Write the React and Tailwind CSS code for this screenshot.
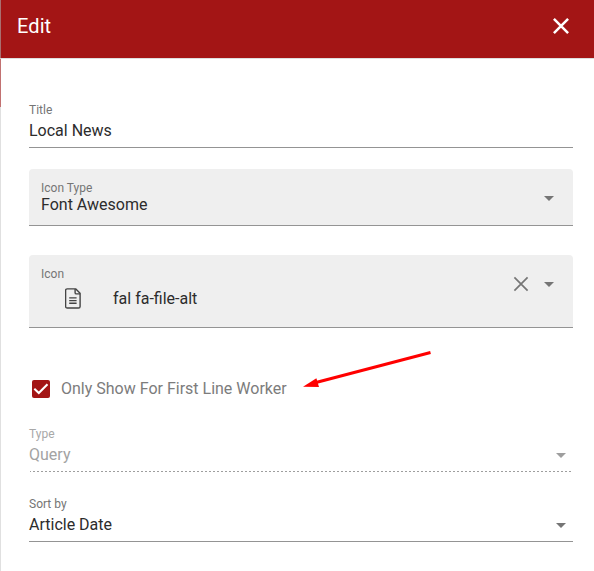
import React from "react";

function Caret({ className = "" }) {
  return (
    <svg className={`h-6 w-6 shrink-0 ${className}`} viewBox="0 0 24 24" fill="currentColor">
      <path d="M7 10l5 5 5-5z" />
    </svg>
  );
}

function LineField({ label, value, caret, disabled }) {
  return (
    <div
      className={`flex h-12 justify-between border-b ${
        disabled ? "border-transparent" : "border-[#949494]"
      }`}
    >
      <div>
        <div className={`h-[19px] text-xs leading-5 ${disabled ? "text-[#a8a8a8]" : "text-[#757575]"}`}>
          {label}
        </div>
        <div
          className={`text-base leading-6 ${
            disabled ? "text-[#a3a3a3]" : "text-[#2c2c2c]"
          }`}
        >
          {value}
        </div>
      </div>
      {caret && <Caret className={`mt-[19px] ${disabled ? "text-[#9e9e9e]" : "text-[#757575]"}`} />}
    </div>
  );
}

export default function App() {
  return (
    <div className="flex h-[571px] w-[594px] overflow-hidden bg-white font-[Roboto,sans-serif]">
      <div className="flex w-px shrink-0 flex-col">
        <div className="h-[58px] bg-[#a97070]" />
        <div className="h-px bg-[#d8c8c8]" />
        <div className="h-12 bg-[#c27171]" />
        <div className="flex-1 bg-[#e0e0e0]" />
      </div>
      <div className="flex flex-1 flex-col">
        <header className="flex h-[59px] shrink-0 items-start justify-between border-b border-[#dedede] bg-[#a31515] pr-[21px] pl-4 text-white">
          <h1 className="pt-[10px] text-xl leading-8 tracking-[0.1px]">Edit</h1>
          <svg
            className="mt-[14px] h-6 w-6"
            viewBox="0 0 24 24"
            fill="none"
            stroke="currentColor"
            strokeWidth="2.5"
          >
            <path d="M4.9 4.9l14.2 14.2M19.1 4.9L4.9 19.1" />
          </svg>
        </header>
        <main className="flex flex-1 flex-col pt-[41px] pr-[21px] pl-7">
          <LineField label="Title" value="Local News" />

          <div className="mt-[21px] flex h-[57px] justify-between rounded-t border-b border-[#949494] bg-[#efefef] px-3">
            <div className="pt-[9px]">
              <div className="h-[15px] text-xs leading-5 text-[#757575]">Icon Type</div>
              <div className="text-base leading-6 text-[#2c2c2c]">Font Awesome</div>
            </div>
            <Caret className="mt-[17px] text-[#757575]" />
          </div>

          <div className="mt-[29px] flex h-[73px] justify-between rounded-t border-b border-[#949494] bg-[#efefef] px-3">
            <div className="pt-[9px]">
              <div className="h-[23px] text-xs leading-5 text-[#757575]">Icon</div>
              <div className="flex items-center text-[#2c2c2c]">
                <svg
                  className="-mt-px ml-6 h-[21px] w-4"
                  viewBox="0 0 16 21"
                  fill="none"
                  stroke="#444"
                  strokeWidth="1.4"
                >
                  <path d="M2.2 .9h8.6l4.3 4.3v13.2a1.6 1.6 0 0 1-1.6 1.6H2.2a1.6 1.6 0 0 1-1.6-1.6V2.5A1.6 1.6 0 0 1 2.2.9z" />
                  <path d="M10.1 1v3.7a1.2 1.2 0 0 0 1.2 1.2H15M4.2 9.9h7.4M4.2 12.6h7.4M4.2 15.3h7.4" />
                </svg>
                <span className="ml-8 text-base leading-6">fal fa-file-alt</span>
              </div>
            </div>
            <div className="flex gap-1 pt-[17px] text-[#757575]">
              <svg className="h-6 w-6" viewBox="0 0 24 24" fill="none" stroke="currentColor" strokeWidth="1.7">
                <path d="M5.4 5.4l13.2 13.2M18.6 5.4L5.4 18.6" />
              </svg>
              <Caret />
            </div>
          </div>

          <div className="relative mt-[49px] flex h-6 items-center pl-[3px]">
            <div className="h-[18px] w-[18px] rounded-[2px] bg-[#a31515]">
              <svg className="h-[18px] w-[18px]" viewBox="0 0 18 18" fill="none" stroke="white" strokeWidth="2.1">
                <path d="M2.3 8.8l4.5 4.2L15.5 4.2" />
              </svg>
            </div>
            <span className="ml-[11px] text-base leading-6 text-[#7c7c7c]">
              Only Show For First Line Worker
            </span>
            <svg className="absolute -top-[29px] left-[272px] h-12 w-[132px]" viewBox="0 0 132 48">
              <path d="M14 34.8L129.5 4.5" stroke="#f00" strokeWidth="3" />
              <path d="M2 38.7L15.4 30.2 18 38.9z" fill="#f00" />
            </svg>
          </div>

          <div className="mt-[23px]">
            <LineField label="Type" value="Query" caret disabled />
            <svg className="-mt-px block h-px w-full">
              <path d="M1 .5H544" stroke="#9e9e9e" strokeDasharray="2 2" strokeDashoffset="1" />
            </svg>
          </div>

          <div className="mt-[22px]">
            <LineField label="Sort by" value="Article Date" caret />
          </div>
        </main>
      </div>
    </div>
  );
}
